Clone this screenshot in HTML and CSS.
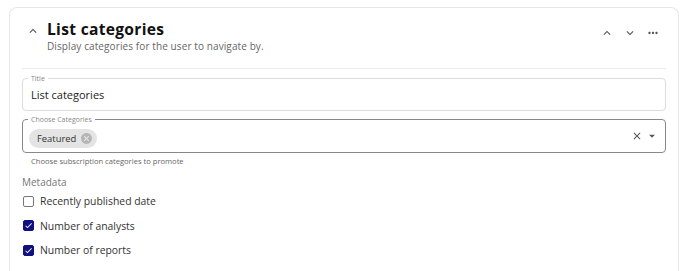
FILE: index.html
```html
<!DOCTYPE html>
<html>
<head>
  <title>List categories</title>
  <link rel="stylesheet" href="styles.css">
</head>
<body>
  <div class="card">
    <div class="card-header">
      <svg class="icon toggle" viewBox="0 0 24 24"><path d="M7.41 15.41 12 10.83l4.59 4.58L18 14l-6-6-6 6z"/></svg>
      <div class="heading">
        <h2>List categories</h2>
        <p>Display categories for the user to navigate by.</p>
      </div>
      <div class="actions">
        <svg class="icon" viewBox="0 0 24 24"><path d="M7.41 15.41 12 10.83l4.59 4.58L18 14l-6-6-6 6z"/></svg>
        <svg class="icon" viewBox="0 0 24 24"><path d="M7.41 8.59 12 13.17l4.59-4.58L18 10l-6 6-6-6z"/></svg>
        <svg class="icon" viewBox="0 0 24 24"><path d="M6 10c-1.1 0-2 .9-2 2s.9 2 2 2 2-.9 2-2-.9-2-2-2m12 0c-1.1 0-2 .9-2 2s.9 2 2 2 2-.9 2-2-.9-2-2-2m-6 0c-1.1 0-2 .9-2 2s.9 2 2 2 2-.9 2-2-.9-2-2-2"/></svg>
      </div>
    </div>

    <div class="card-body">
      <div class="field">
        <span class="field-label">Title</span>
        <div class="value">List categories</div>
      </div>

      <div class="field active">
        <span class="field-label">Choose Categories</span>
        <div class="chips">
          <span class="chip">Featured
            <svg class="chip-del" viewBox="0 0 24 24"><path d="M12 2C6.47 2 2 6.47 2 12s4.47 10 10 10 10-4.47 10-10S17.53 2 12 2m5 13.59L15.59 17 12 13.41 8.41 17 7 15.59 10.59 12 7 8.41 8.41 7 12 10.59 15.59 7 17 8.41 13.41 12z"/></svg>
          </span>
        </div>
        <div class="adornments">
          <svg class="icon clear" viewBox="0 0 24 24"><path d="M19 6.41 17.59 5 12 10.59 6.41 5 5 6.41 10.59 12 5 17.59 6.41 19 12 13.41 17.59 19 19 17.59 13.41 12z"/></svg>
          <svg class="icon drop" viewBox="0 0 24 24"><path d="M7 10l5 5 5-5z"/></svg>
        </div>
      </div>
      <div class="helper">Choose subscription categories to promote</div>

      <div class="group-label">Metadata</div>
      <label class="check"><span class="box"></span>Recently published date</label>
      <label class="check"><span class="box on"><svg viewBox="0 0 24 24"><path d="M9 16.17 4.83 12l-1.42 1.41L9 19 21 7l-1.41-1.41z"/></svg></span>Number of analysts</label>
      <label class="check"><span class="box on"><svg viewBox="0 0 24 24"><path d="M9 16.17 4.83 12l-1.42 1.41L9 19 21 7l-1.41-1.41z"/></svg></span>Number of reports</label>
    </div>
  </div>
</body>
</html>
```

FILE: styles.css
```css
body {
  margin: 0;
  padding: 7px 9px 0 9px;
  background-color: #fff;
  font-family: "Open Sans", "DejaVu Sans", sans-serif;
  color: #222;
  overflow: hidden;
  height: 271px;
  box-sizing: border-box;
}

.card {
  border: 1px solid #e6e6e6;
  border-bottom: none;
  border-radius: 8px 8px 0 0;
  width: 670px;
  height: 300px;
  box-sizing: border-box;
  padding: 0 12px;
}

.icon {
  width: 14px;
  height: 14px;
  fill: #555;
}

.card-header {
  display: flex;
  align-items: flex-start;
  padding: 12px 0 16px 0;
  border-bottom: 1px solid #ebebeb;
}

.card-header .toggle {
  margin: 4px 7px 0 4px;
}

.heading h2 {
  margin: 0;
  font-size: 15.6px;
  font-weight: 700;
  color: #111;
  line-height: 19px;
  letter-spacing: 0.3px;
}

.heading p {
  margin: 1px 0 0 0;
  font-size: 10px;
  line-height: 12px;
  color: #666;
  letter-spacing: 0.1px;
}

.actions {
  margin-left: auto;
  display: flex;
  gap: 9px;
  padding: 6px 6px 0 0;
}

.card-body {
  padding-top: 9px;
}

.field {
  border: 1px solid #dcdcdc;
  border-radius: 4px;
  padding: 0 6px 0 8px;
  height: 33px;
  box-sizing: border-box;
  display: flex;
  align-items: center;
  position: relative;
}

.field-label {
  position: absolute;
  top: -5px;
  left: 5px;
  font-size: 7px;
  line-height: 9px;
  color: #888;
  padding: 0 3px;
  background-color: #fff;
}

.field .value {
  font-size: 11px;
  color: #222;
}

.field.active {
  border-color: #888;
  margin-top: 8px;
  height: 34px;
}

.chips {
  flex: 1;
}

.chip {
  display: inline-flex;
  align-items: center;
  gap: 4px;
  background-color: #e4e4e4;
  border-radius: 10px;
  height: 19px;
  padding: 0 4px 0 8px;
  font-size: 9.4px;
  font-weight: 500;
  color: #333;
  margin-left: -2px;
}

.chip-del {
  width: 13px;
  height: 13px;
  fill: #b5b5b5;
}

.adornments {
  display: flex;
  align-items: center;
  gap: 2px;
}

.adornments .clear {
  width: 12px;
  height: 12px;
}

.helper {
  font-size: 7.6px;
  line-height: 10px;
  color: #666;
  margin: 3px 0 0 9px;
}

.group-label {
  font-size: 10px;
  line-height: 14px;
  color: #777;
  margin: 9px 0 5px 0;
}

.check {
  display: flex;
  align-items: center;
  font-size: 10.4px;
  color: #333;
  height: 14px;
  margin-bottom: 10.5px;
}

.box {
  width: 11px;
  height: 11px;
  box-sizing: border-box;
  border: 1.5px solid #777;
  border-radius: 2px;
  margin: 0 6px 0 1px;
  display: flex;
  align-items: center;
  justify-content: center;
}

.box.on {
  background-color: #101080;
  border-color: #101080;
}

.box svg {
  width: 9px;
  height: 9px;
  fill: #fff;
}
```
